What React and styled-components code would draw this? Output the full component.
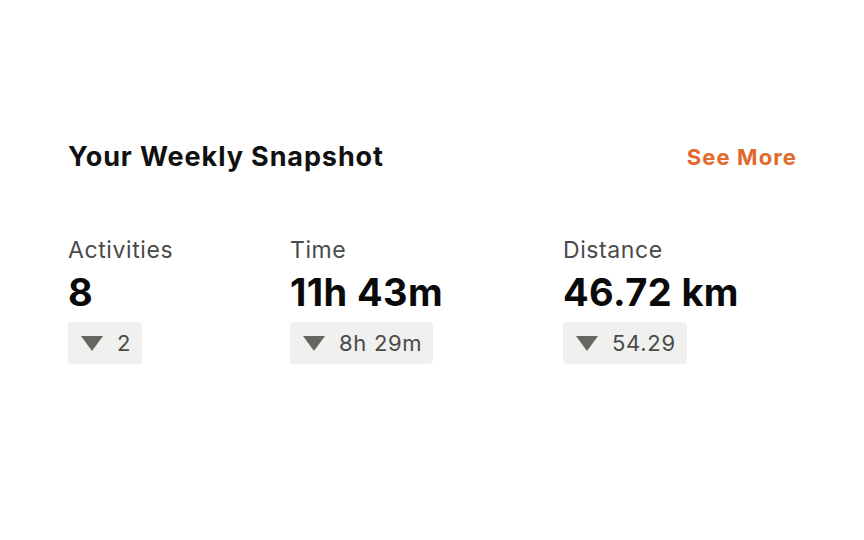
import React from 'react';
import styled, { createGlobalStyle } from 'styled-components';

const GlobalStyle = createGlobalStyle`
  body {
    margin: 0;
    background: #ffffff;
    font-family: Inter, "Noto Sans", sans-serif;
  }
`;

const Page = styled.div`
  width: 864px;
  height: 540px;
  box-sizing: border-box;
  padding: 138px 67px 0 68px;
  display: flex;
  flex-direction: column;
`;

const Header = styled.div`
  display: flex;
  justify-content: space-between;
  align-items: center;
`;

const Title = styled.h2`
  margin: 0;
  font-size: 27px;
  font-weight: 700;
  color: #111111;
  letter-spacing: 0.9px;
  line-height: 38px;
`;

const SeeMore = styled.a`
  font-size: 22px;
  font-weight: 700;
  color: #e0692b;
  letter-spacing: 1.1px;
  text-decoration: none;
  cursor: pointer;
`;

const Stats = styled.div`
  display: grid;
  grid-template-columns: 222px 273px auto;
  margin-top: 58px;
`;

const Stat = styled.div`
  display: flex;
  flex-direction: column;
  align-items: flex-start;
`;

const Label = styled.div`
  font-size: 23px;
  color: #4a4a4a;
  line-height: 32px;
  letter-spacing: 0.6px;
`;

const Value = styled.div`
  margin-top: 3px;
  font-size: 38px;
  font-weight: 700;
  color: #0a0a0a;
  line-height: 46px;
  letter-spacing: 0.4px;
`;

const Badge = styled.div`
  margin-top: 7px;
  display: flex;
  align-items: center;
  gap: 14px;
  height: 42px;
  padding: 0 11px 0 13px;
  background: #f0f0ee;
  border-radius: 4px;
  font-size: 22px;
  letter-spacing: 0.7px;
  color: #4a4a4a;
`;

const Triangle = () => (
  <svg width="22" height="15" viewBox="0 0 22 15">
    <polygon points="0,0 22,0 11,15" fill="#666660" />
  </svg>
);

const stats = [
  { label: 'Activities', value: '8', change: '2' },
  { label: 'Time', value: '11h 43m', change: '8h 29m' },
  { label: 'Distance', value: '46.72 km', change: '54.29' },
];

export default function App() {
  return (
    <>
      <GlobalStyle />
      <Page>
        <Header>
          <Title>Your Weekly Snapshot</Title>
          <SeeMore>See More</SeeMore>
        </Header>
        <Stats>
          {stats.map((s) => (
            <Stat key={s.label}>
              <Label>{s.label}</Label>
              <Value>{s.value}</Value>
              <Badge>
                <Triangle />
                {s.change}
              </Badge>
            </Stat>
          ))}
        </Stats>
      </Page>
    </>
  );
}
